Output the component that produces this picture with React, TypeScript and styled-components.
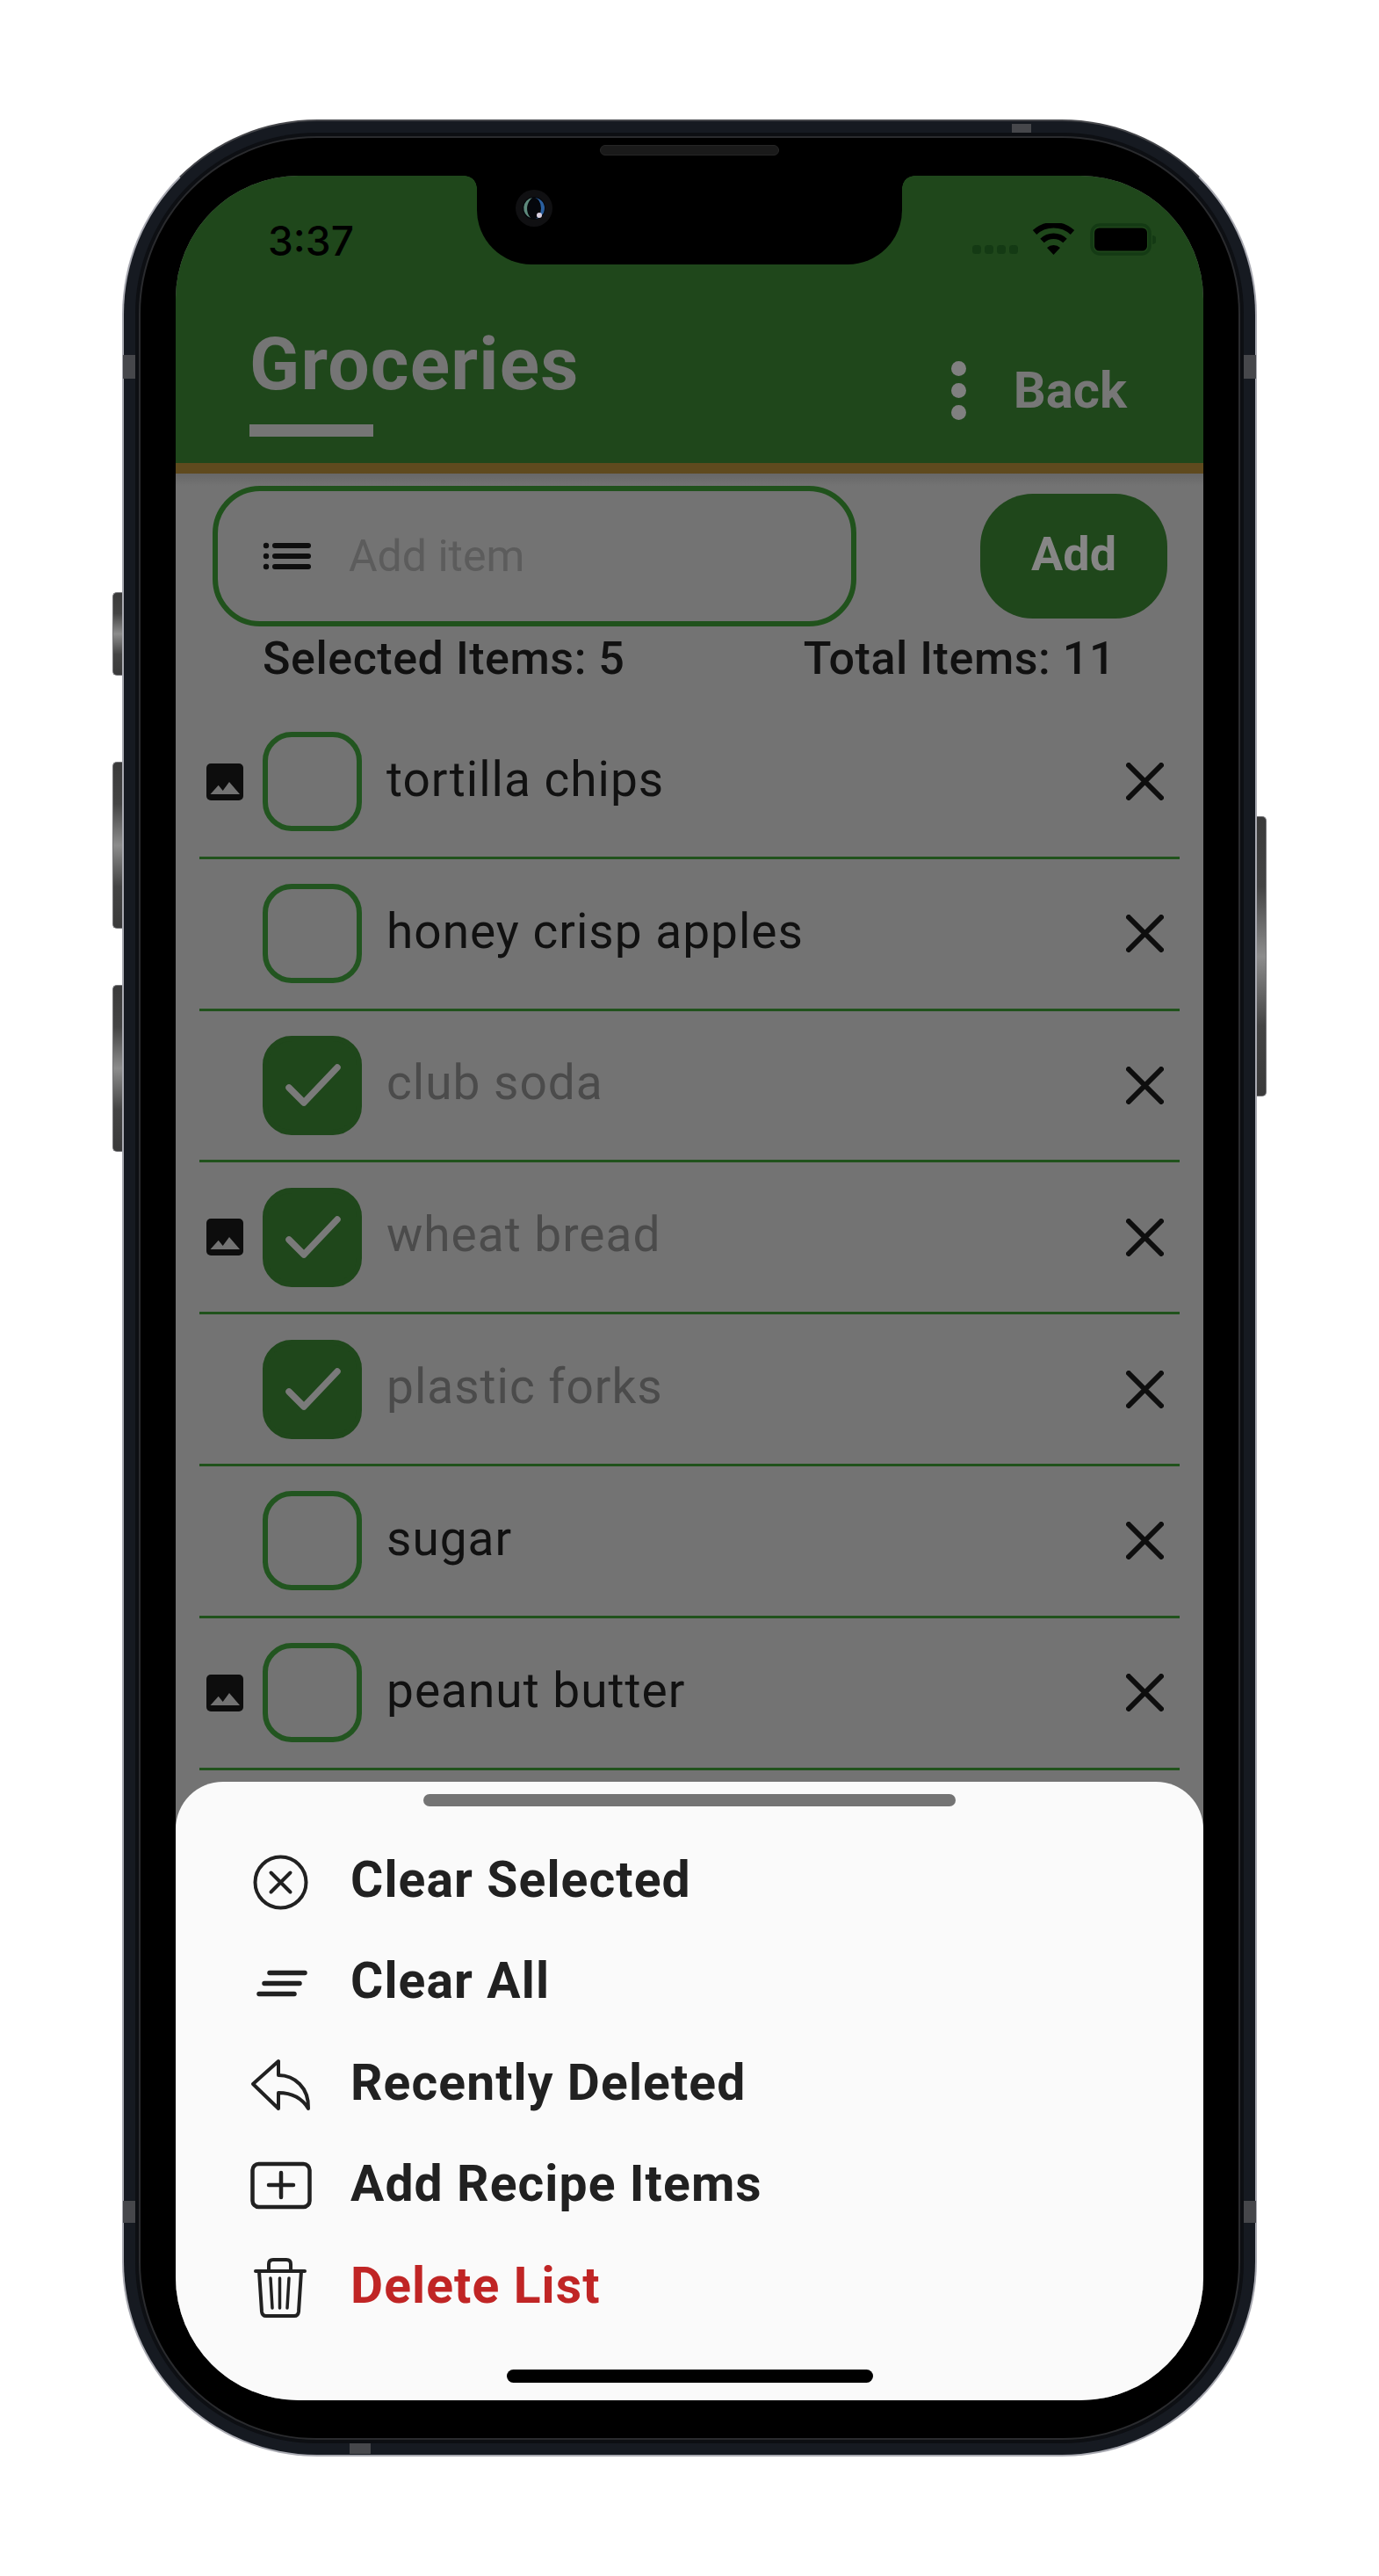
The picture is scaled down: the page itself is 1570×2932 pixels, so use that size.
import React from "react";
import styled, { createGlobalStyle } from "styled-components";

const Global = createGlobalStyle`
  html, body { margin: 0; padding: 0; background: #fff; }
  * { box-sizing: border-box; }
`;

const FONT = `Roboto, "Noto Sans", "Liberation Sans", sans-serif`;
const GREEN = "#1f471b";

const Page = styled.div`
  width: 1570px;
  height: 2932px;
  display: flex;
  justify-content: center;
  padding-top: 136px;
  background: #fff;
  font-family: ${FONT};
`;

const Frame = styled.div`
  position: relative;
  width: 1292px;
  height: 2660px;
  padding: 19px;
  background: #161a21;
  border: 2px solid #a9aab2;
  border-top-color: #45464a;
  border-radius: 222px;
`;

const SideButton = styled.div<{ $side: "left" | "right"; $top: number; $h: number }>`
  position: absolute;
  top: ${(p) => p.$top}px;
  height: ${(p) => p.$h}px;
  width: 11px;
  ${(p) => (p.$side === "left" ? "left: -13px;" : "right: -13px;")}
  border: 1.5px solid #77777a;
  ${(p) => (p.$side === "left" ? "border-right: 0; border-radius: 5px 0 0 5px;" : "border-left: 0; border-radius: 0 5px 5px 0;")}
  background: linear-gradient(to bottom, #3a3a3a, #444 25%, #8c8c8c 50%, #444 75%, #3a3a3a);
`;

const Band = styled.div<{ $left?: number; $right?: number; $top?: number; $bottom?: number; $w: number; $h: number }>`
  position: absolute;
  ${(p) => (p.$left !== undefined ? `left: ${p.$left}px;` : "")}
  ${(p) => (p.$right !== undefined ? `right: ${p.$right}px;` : "")}
  ${(p) => (p.$top !== undefined ? `top: ${p.$top}px;` : "")}
  ${(p) => (p.$bottom !== undefined ? `bottom: ${p.$bottom}px;` : "")}
  width: ${(p) => p.$w}px;
  height: ${(p) => p.$h}px;
  background: #46474b;
`;

const Bezel = styled.div`
  position: relative;
  width: 100%;
  height: 100%;
  padding: 43px 39px 43px 40px;
  background: #000;
  border-radius: 200px;
  box-shadow: 0 0 0 2px #2a2b2e, 0 0 0 6px #0d0f13;
`;

const Speaker = styled.div`
  position: absolute;
  top: 8px;
  left: 523px;
  width: 204px;
  height: 12px;
  border-radius: 6px;
  background: #1a1a1a;
  border: 1px solid #262626;
`;

const Screen = styled.div`
  position: relative;
  width: 1170px;
  height: 2532px;
  border-radius: 140px;
  overflow: hidden;
  display: flex;
  flex-direction: column;
  background: #737373;
`;

const Notch = styled.div`
  position: absolute;
  top: 0;
  left: 343px;
  width: 484px;
  height: 101px;
  background: #000;
  border-radius: 0 0 62px 62px;
  &::before, &::after {
    content: "";
    position: absolute;
    top: 0;
    width: 14px;
    height: 14px;
  }
  &::before { left: -14px; background: radial-gradient(circle at 0 100%, transparent 13.5px, #000 14px); }
  &::after { right: -14px; background: radial-gradient(circle at 100% 100%, transparent 13.5px, #000 14px); }
`;

const CameraSvg = styled.svg`
  position: absolute;
  left: 43px;
  top: 15px;
`;

const Header = styled.header`
  flex: none;
  height: 339px;
  background: ${GREEN};
  border-bottom: 12px solid #5f4a1e;
  display: flex;
  flex-direction: column;
`;

const StatusBar = styled.div`
  display: flex;
  justify-content: space-between;
  align-items: flex-start;
  height: 54px;
  margin-top: 46px;
  padding: 0 54px 0 105px;
`;

const Time = styled.span`
  font-family: Inter, "Liberation Sans", sans-serif;
  font-size: 46px;
  font-weight: 500;
  line-height: 56px;
  color: #000;
`;

const StatusIcons = styled.svg`
  margin-top: 8px;
`;

const TitleRow = styled.div`
  display: flex;
  justify-content: space-between;
  padding: 73px 87px 0 84px;
`;

const TitleBlock = styled.div`
  display: flex;
  flex-direction: column;
`;

const Title = styled.h1`
  margin: 0;
  font-size: 84px;
  line-height: 84px;
  font-weight: 700;
  letter-spacing: 1.2px;
  color: #757575;
`;

const Underline = styled.div`
  width: 141px;
  height: 14px;
  margin-top: 26px;
  background: #757575;
`;

const HeaderActions = styled.div`
  display: flex;
  align-items: center;
  gap: 54px;
  padding-top: 42px;
  height: 100px;
`;

const Dots = styled.div`
  display: flex;
  flex-direction: column;
  gap: 8px;
`;

const Dot = styled.span`
  display: block;
  width: 17px;
  height: 17px;
  border-radius: 50%;
  background: #808080;
`;

const Back = styled.span`
  font-size: 58px;
  font-weight: 700;
  line-height: 70px;
  color: #777;
`;

const Content = styled.main`
  flex: 1;
  min-height: 0;
  overflow: hidden;
  background: linear-gradient(#676767, #737373 14px);
  padding-top: 14px;
`;

const InputRow = styled.div`
  display: flex;
  justify-content: space-between;
  align-items: flex-start;
  padding: 0 41px 0 42px;
`;

const InputBox = styled.div`
  width: 733px;
  height: 160px;
  border: 6px solid #20521c;
  border-radius: 54px;
  display: flex;
  align-items: center;
  gap: 43px;
  padding: 0 0 0 51px;
`;

const ListGlyph = styled.svg`
  flex: none;
`;

const Placeholder = styled.span`
  font-size: 50px;
  line-height: 60px;
  color: #5c5c5c;
`;

const AddButton = styled.button`
  width: 213px;
  height: 142px;
  margin-top: 9px;
  padding: 0 0 6px;
  border: 0;
  border-radius: 60px;
  background: ${GREEN};
  color: #868686;
  font-family: ${FONT};
  font-size: 54px;
  font-weight: 700;
`;

const Stats = styled.div`
  display: flex;
  justify-content: space-between;
  height: 74px;
  padding: 0 100px 0 99px;
  align-items: center;
`;

const Stat = styled.span`
  font-size: 52px;
  font-weight: 500;
  letter-spacing: 0.55px;
  color: #111;
  line-height: 74px;
`;

const List = styled.ul`
  list-style: none;
  margin: 18px 27px 0;
  padding: 0;
`;

const Row = styled.li`
  height: 172.8px;
  border-bottom: 3.5px solid #20521c;
  display: flex;
  align-items: center;
  padding: 0 18px 0 8px;
`;

const ThumbSlot = styled.div`
  width: 42px;
  height: 42px;
  flex: none;
  margin-right: 22px;
`;

const Box = styled.div<{ $checked: boolean }>`
  flex: none;
  width: 113px;
  height: 113px;
  border-radius: 33px;
  border: 6px solid ${(p) => (p.$checked ? GREEN : "#225520")};
  background: ${(p) => (p.$checked ? GREEN : "transparent")};
  display: flex;
  align-items: center;
  justify-content: center;
`;

const ItemName = styled.span<{ $checked: boolean }>`
  flex: 1;
  margin-left: 28px;
  margin-top: -6px;
  font-size: 55px;
  line-height: 64px;
  letter-spacing: 1px;
  color: ${(p) => (p.$checked ? "#4b4b4b" : "#111")};
`;

const CrossGlyph = styled.svg`
  flex: none;
`;

const Sheet = styled.section`
  position: absolute;
  left: 0;
  right: 0;
  bottom: 0;
  height: 704px;
  background: #fafafa;
  border-radius: 54px 54px 0 0;
  display: flex;
  flex-direction: column;
  padding-top: 14px;
`;

const Handle = styled.div`
  flex: none;
  align-self: center;
  width: 606px;
  height: 14px;
  border-radius: 7px;
  background: #747474;
  margin-bottom: 24px;
`;

const MenuRow = styled.div`
  flex: none;
  height: 115.5px;
  display: flex;
  align-items: center;
  padding-left: 85px;
  gap: 44px;
`;

const MenuIcon = styled.svg`
  flex: none;
  overflow: visible;
`;

const MenuLabel = styled.span<{ $danger?: boolean }>`
  font-size: 57px;
  font-weight: 700;
  line-height: 70px;
  letter-spacing: 1.1px;
  margin-top: 4px;
  color: ${(p) => (p.$danger ? "#c02525" : "#212121")};
`;

const HomeBar = styled.div`
  position: absolute;
  left: 377px;
  bottom: 20px;
  width: 417px;
  height: 15px;
  border-radius: 8px;
  background: #000;
`;

const items = [
  { name: "tortilla chips", checked: false, thumb: true },
  { name: "honey crisp apples", checked: false, thumb: false },
  { name: "club soda", checked: true, thumb: false },
  { name: "wheat bread", checked: true, thumb: true },
  { name: "plastic forks", checked: true, thumb: false },
  { name: "sugar", checked: false, thumb: false },
  { name: "peanut butter", checked: false, thumb: true },
];

const Thumb = () => (
  <svg width="42" height="42" viewBox="0 0 42 42">
    <rect width="42" height="42" rx="5" fill="#0d0d0d" />
    <path d="M4.5 35 L13.7 24.7 L18.7 31 L26 21 L38 35 Z" fill="#737373" />
  </svg>
);

const Check = () => (
  <svg width="70" height="56" viewBox="0 0 70 56">
    <path d="M8 31 L25 48 L63 8" fill="none" stroke="#7a7a7a" strokeWidth="7.5" strokeLinecap="round" strokeLinejoin="round" />
  </svg>
);

const Cross = () => (
  <CrossGlyph width="43" height="43" viewBox="0 0 43 43">
    <path d="M3 3 L40 40 M40 3 L3 40" stroke="#0e0e0e" strokeWidth="6" strokeLinecap="round" />
  </CrossGlyph>
);

const IconClearSelected = () => (
  <MenuIcon width="70" height="70" viewBox="0 0 70 70" fill="none" stroke="#212121" strokeLinecap="round">
    <circle cx="34.5" cy="39.5" r="29" strokeWidth="4" />
    <path d="M23.5 28.5 L45.5 50.5 M45.5 28.5 L23.5 50.5" strokeWidth="4" />
  </MenuIcon>
);

const IconClearAll = () => (
  <MenuIcon width="70" height="70" viewBox="0 0 70 70" fill="none" stroke="#212121" strokeLinecap="round" strokeWidth="5.5">
    <path d="M22 27.5 H62 M16 39.5 H56 M10 51.5 H50" />
  </MenuIcon>
);

const IconReply = () => (
  <MenuIcon width="70" height="70" viewBox="0 0 70 70" fill="none" stroke="#212121" strokeWidth="4" strokeLinejoin="round">
    <path d="M3 38 L32 12 L32 28 C50 28 67 42 66 66 C60 56 50 48 32 48 L32 66 Z" />
  </MenuIcon>
);

const IconAdd = () => (
  <MenuIcon width="70" height="70" viewBox="0 0 70 70" fill="none" stroke="#212121" strokeLinecap="round">
    <rect x="2.5" y="14" width="65" height="49" rx="7" strokeWidth="4.5" />
    <path d="M35 24 V52 M21 38 H49" strokeWidth="4.5" />
  </MenuIcon>
);

const IconTrash = () => (
  <MenuIcon width="70" height="70" viewBox="0 0 70 70" fill="none" stroke="#212121" strokeLinecap="round" strokeLinejoin="round" strokeWidth="4">
    <path d="M6 20 H62" />
    <path d="M21 20 V12 Q21 7 26 7 H41 Q46 7 46 12 V20" />
    <path d="M10 20 L13 66 Q13.5 71 18 71 H50 Q54.5 71 55 66 L58 20" />
    <path d="M23 28 L25 62 M33.5 28 V62 M44 28 L42 62" strokeWidth="3.5" />
  </MenuIcon>
);

const menu = [
  { label: "Clear Selected", Icon: IconClearSelected },
  { label: "Clear All", Icon: IconClearAll },
  { label: "Recently Deleted", Icon: IconReply },
  { label: "Add Recipe Items", Icon: IconAdd },
  { label: "Delete List", Icon: IconTrash, danger: true },
];

export default function App() {
  return (
    <Page>
      <Global />
      <Frame>
        <SideButton $side="left" $top={536} $h={95} />
        <SideButton $side="left" $top={729} $h={190} />
        <SideButton $side="left" $top={983} $h={190} />
        <SideButton $side="right" $top={791} $h={319} />
        <Band $left={-1} $top={266} $w={15} $h={27} />
        <Band $right={-1} $top={266} $w={15} $h={27} />
        <Band $left={-1} $bottom={264} $w={17} $h={25} />
        <Band $right={-1} $bottom={264} $w={17} $h={25} />
        <Band $right={255} $top={3} $w={22} $h={16} />
        <Band $left={257} $bottom={1} $w={24} $h={16} />
        <Bezel>
          <Speaker />
          <Screen>
            <Header>
              <StatusBar>
                <Time>3:37</Time>
                <StatusIcons width="209" height="40" viewBox="0 0 209 40">
                  <g fill="#143a14">
                    <rect x="0" y="25" width="10" height="10" rx="3.5" />
                    <rect x="14" y="25" width="10" height="10" rx="3.5" />
                    <rect x="28" y="25" width="10" height="10" rx="3.5" />
                    <rect x="42" y="25" width="10" height="10" rx="3.5" />
                  </g>
                  <g fill="none" stroke="#000" strokeWidth="6.5">
                    <path d="M71 10.5 A32 32 0 0 1 114 10.5" />
                    <path d="M79.5 20 A19 19 0 0 1 105.5 20" />
                  </g>
                  <path d="M92.5 36 L85 28 A11 11 0 0 1 100 28 Z" fill="#000" />
                  <rect x="136" y="2" width="66" height="33" rx="9" fill="none" stroke="#143a14" strokeWidth="3.5" />
                  <rect x="139" y="5.5" width="60" height="26" rx="5.5" fill="#000" />
                  <path d="M205 14 A5 5 0 0 1 205 24 Z" fill="#143a14" />
                </StatusIcons>
              </StatusBar>
              <TitleRow>
                <TitleBlock>
                  <Title>Groceries</Title>
                  <Underline />
                </TitleBlock>
                <HeaderActions>
                  <Dots>
                    <Dot />
                    <Dot />
                    <Dot />
                  </Dots>
                  <Back>Back</Back>
                </HeaderActions>
              </TitleRow>
            </Header>
            <Content>
              <InputRow>
                <InputBox>
                  <ListGlyph width="55" height="32" viewBox="0 0 55 32">
                    <g fill="#0e0e0e">
                      <circle cx="4" cy="4" r="3.2" />
                      <circle cx="4" cy="16" r="3.2" />
                      <circle cx="4" cy="28" r="3.2" />
                    </g>
                    <path d="M14 4 H52 M14 16 H52 M14 28 H52" stroke="#0e0e0e" strokeWidth="6" strokeLinecap="round" />
                  </ListGlyph>
                  <Placeholder>Add item</Placeholder>
                </InputBox>
                <AddButton>Add</AddButton>
              </InputRow>
              <Stats>
                <Stat>Selected Items: 5</Stat>
                <Stat>Total Items: 11</Stat>
              </Stats>
              <List>
                {items.map((it) => (
                  <Row key={it.name}>
                    <ThumbSlot>{it.thumb && <Thumb />}</ThumbSlot>
                    <Box $checked={it.checked}>{it.checked && <Check />}</Box>
                    <ItemName $checked={it.checked}>{it.name}</ItemName>
                    <Cross />
                  </Row>
                ))}
              </List>
            </Content>
            <Sheet>
              <Handle />
              {menu.map(({ label, Icon, danger }) => (
                <MenuRow key={label}>
                  <Icon />
                  <MenuLabel $danger={danger}>{label}</MenuLabel>
                </MenuRow>
              ))}
            </Sheet>
            <HomeBar />
            <Notch>
              <CameraSvg width="44" height="44" viewBox="0 0 44 44">
                <circle cx="22" cy="22" r="21" fill="#101012" />
                <circle cx="22" cy="22" r="13" fill="#05070c" />
                <path d="M22 10 A12 12 0 0 1 22 34 A8 12 0 0 0 22 10 Z" fill="#2a5f9e" />
                <path d="M20 10 A12 12 0 0 0 18 33 A16 16 0 0 1 20 10 Z" fill="#5e8a7c" />
                <circle cx="28" cy="30" r="3" fill="#d8cfe0" />
              </CameraSvg>
            </Notch>
          </Screen>
        </Bezel>
      </Frame>
    </Page>
  );
}
